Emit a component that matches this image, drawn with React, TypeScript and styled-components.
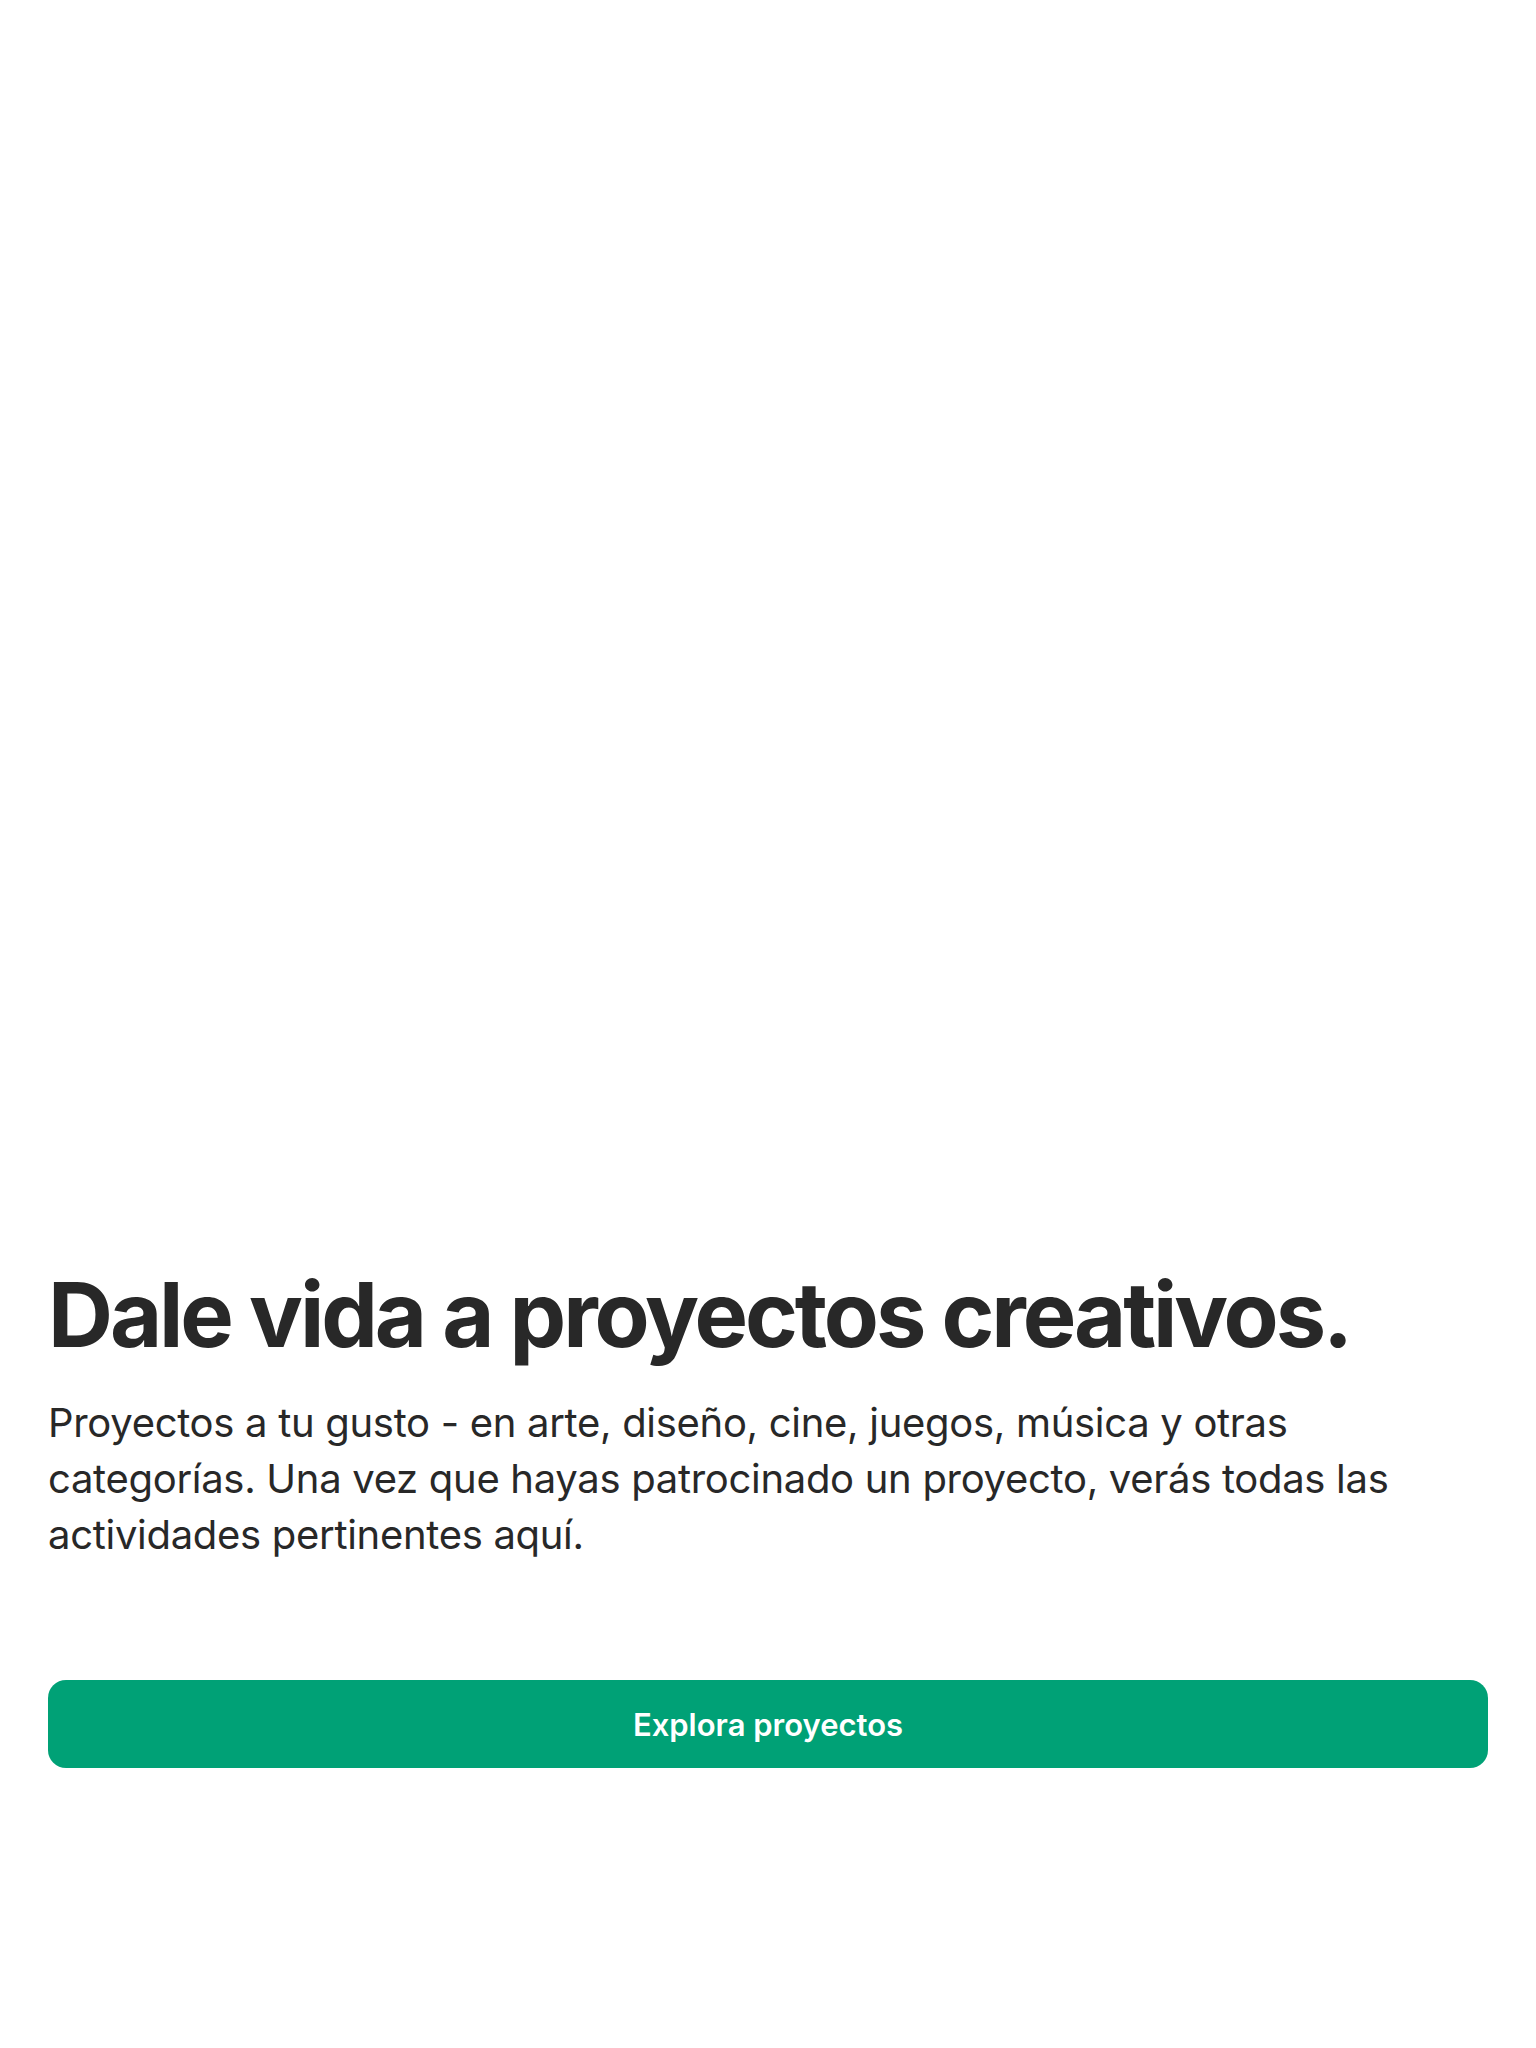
import React from "react";
import styled, { createGlobalStyle } from "styled-components";

const GlobalStyle = createGlobalStyle`
  html, body {
    margin: 0;
    padding: 0;
    background: #ffffff;
  }
  body {
    font-family: Inter, "Noto Sans", "Liberation Sans", sans-serif;
    -webkit-font-smoothing: antialiased;
  }
`;

const Page = styled.main`
  box-sizing: border-box;
  min-height: 2048px;
  display: flex;
  flex-direction: column;
  justify-content: flex-end;
  padding: 0 48px 280px;
`;

const Title = styled.h1`
  margin: 0;
  font-size: 90px;
  line-height: 110px;
  font-weight: 650;
  letter-spacing: -3.1px;
  color: #282828;
`;

const Body = styled.p`
  margin: 25px 0 0;
  max-width: 1390px;
  font-size: 40px;
  line-height: 56px;
  font-weight: 400;
  letter-spacing: -0.3px;
  color: #282828;
`;

const Button = styled.button`
  margin-top: 117px;
  height: 88px;
  width: 100%;
  border: none;
  border-radius: 18px;
  background: #00a176;
  color: #ffffff;
  font-family: inherit;
  font-size: 31px;
  font-weight: 600;
  cursor: pointer;
`;

export default function App() {
  return (
    <>
      <GlobalStyle />
      <Page>
        <Title>Dale vida a proyectos creativos.</Title>
        <Body>
          Proyectos a tu gusto - en arte, diseño, cine, juegos, música y otras
          categorías. Una vez que hayas patrocinado un proyecto, verás todas las
          actividades pertinentes aquí.
        </Body>
        <Button>Explora proyectos</Button>
      </Page>
    </>
  );
}
